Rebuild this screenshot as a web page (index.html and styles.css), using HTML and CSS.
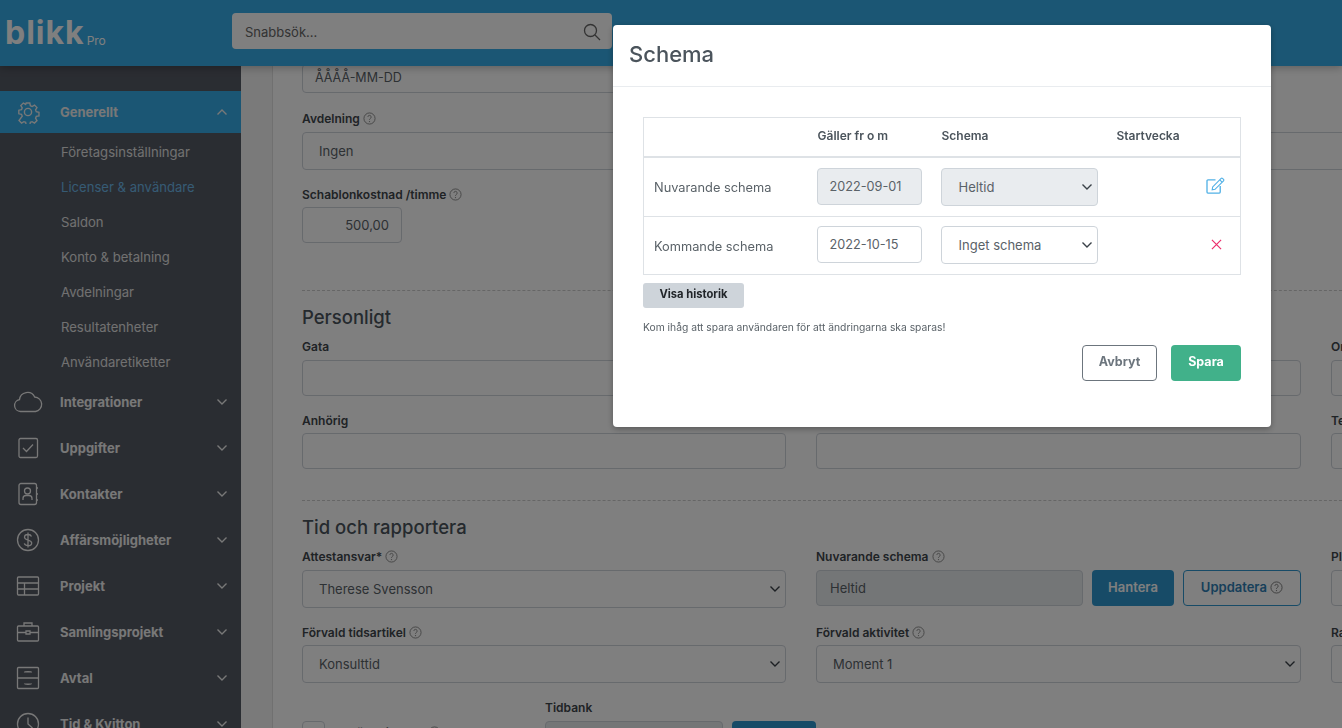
FILE: index.html
```html
<!DOCTYPE html>
<html lang="sv">
<head>
<meta charset="utf-8">
<title>Schema</title>
<link rel="stylesheet" href="styles.css">
</head>
<body>
<svg class="sprite" width="0" height="0">
  <symbol id="q" viewBox="0 0 14 14"><circle cx="7" cy="7" r="6" fill="none" stroke="currentColor"/><path d="M5.2 5.4a1.8 1.8 0 1 1 2.7 1.6c-.6.4-.9.7-.9 1.4" fill="none" stroke="currentColor"/><circle cx="7" cy="10.3" r=".7" fill="currentColor"/></symbol>
  <symbol id="chev" viewBox="0 0 12 8"><path d="M1.5 1.5 6 6l4.5-4.5" fill="none" stroke="currentColor" stroke-width="1.4"/></symbol>
</svg>
<header class="topbar">
  <div class="logo"><span class="logo-word">blikk</span><span class="logo-pro">Pro</span></div>
  <div class="search"><span>Snabbsök...</span>
    <svg class="search-icon" viewBox="0 0 18 18"><circle cx="7.5" cy="7.5" r="6" fill="none" stroke="currentColor" stroke-width="1.3"/><path d="m12 12 5 5" stroke="currentColor" stroke-width="1.3"/></svg>
  </div>
</header>
<div class="shell">
  <nav class="sidebar">
    <a class="nav-item active">
      <svg class="nav-icon" viewBox="0 0 24 24"><path d="M10 2h4l.6 3 2 .9 2.6-1.6 2.8 2.8-1.6 2.6.8 2 3 .6v4l-3 .6-.8 2 1.6 2.6-2.8 2.8-2.6-1.6-2 .8-.6 3h-4l-.6-3-2-.8-2.6 1.6-2.8-2.8L5.600 16.600l-.8-2-3-.6v-4l3-.6.8-2L4 4.800 6.800 2 9.400 3.600z" transform="translate(1.200 1.200) scale(.9)" fill="none" stroke="currentColor" stroke-width="1.500"/><circle cx="12" cy="12" r="3.600" fill="none" stroke="currentColor" stroke-width="1.400"/></svg>
      <span class="nav-label">Generellt</span>
      <svg class="nav-chev up"><use href="#chev"/></svg>
    </a>
    <div class="subnav">
      <a>Företagsinställningar</a>
      <a class="current">Licenser &amp; användare</a>
      <a>Saldon</a>
      <a>Konto &amp; betalning</a>
      <a>Avdelningar</a>
      <a>Resultatenheter</a>
      <a>Användaretiketter</a>
    </div>
    <a class="nav-item">
      <svg class="nav-icon wide" viewBox="0 0 30 22"><path d="M7.500 20.500a6 6 0 0 1-1-11.900A8 8 0 0 1 21.700 6a7.300 7.300 0 0 1 .8 14.500z" fill="none" stroke="currentColor" stroke-width="1.300"/></svg>
      <span class="nav-label">Integrationer</span>
      <svg class="nav-chev"><use href="#chev"/></svg>
    </a>
    <a class="nav-item">
      <svg class="nav-icon" viewBox="0 0 24 24"><rect x="3" y="2.500" width="18.500" height="19" rx="1.500" fill="none" stroke="currentColor" stroke-width="1.300"/><path d="m7 12 3.500 3.500L17 8.500" fill="none" stroke="currentColor" stroke-width="1.300"/></svg>
      <span class="nav-label">Uppgifter</span>
      <svg class="nav-chev"><use href="#chev"/></svg>
    </a>
    <a class="nav-item">
      <svg class="nav-icon" viewBox="0 0 24 24"><rect x="3" y="1.500" width="17.500" height="21" rx="2" fill="none" stroke="currentColor" stroke-width="1.300"/><circle cx="11.500" cy="9" r="3" fill="none" stroke="currentColor" stroke-width="1.300"/><path d="M7 18v-1.500a3 3 0 0 1 3-3h3a3 3 0 0 1 3 3V18M20.500 6h1.500M20.500 12h1.500M20.500 18h1.500" fill="none" stroke="currentColor" stroke-width="1.300"/></svg>
      <span class="nav-label">Kontakter</span>
      <svg class="nav-chev"><use href="#chev"/></svg>
    </a>
    <a class="nav-item">
      <svg class="nav-icon" viewBox="0 0 24 24"><circle cx="12" cy="12" r="10.500" fill="none" stroke="currentColor" stroke-width="1.300"/><path d="M15.500 8.500c-.5-1.300-1.800-2-3.500-2-2 0-3.500 1-3.500 2.700 0 3.600 7.200 2 7.200 5.700 0 1.700-1.600 2.700-3.700 2.700-1.800 0-3.200-.8-3.700-2.200M12 4.500v15" fill="none" stroke="currentColor" stroke-width="1.300"/></svg>
      <span class="nav-label">Affärsmöjligheter</span>
      <svg class="nav-chev"><use href="#chev"/></svg>
    </a>
    <a class="nav-item">
      <svg class="nav-icon" viewBox="0 0 24 24"><rect x="1.500" y="3" width="21" height="18" rx="1" fill="none" stroke="currentColor" stroke-width="1.300"/><path d="M1.500 9h21M1.500 15h21M8.500 9v12" fill="none" stroke="currentColor" stroke-width="1.300"/></svg>
      <span class="nav-label">Projekt</span>
      <svg class="nav-chev"><use href="#chev"/></svg>
    </a>
    <a class="nav-item">
      <svg class="nav-icon" viewBox="0 0 24 24"><rect x="1.500" y="6" width="21" height="15" rx="1" fill="none" stroke="currentColor" stroke-width="1.300"/><path d="M8 6V3h8v3M1.500 12.500h8.500M14 12.500h8.500M10 11h4v3h-4z" fill="none" stroke="currentColor" stroke-width="1.300"/></svg>
      <span class="nav-label">Samlingsprojekt</span>
      <svg class="nav-chev"><use href="#chev"/></svg>
    </a>
    <a class="nav-item">
      <svg class="nav-icon" viewBox="0 0 24 24"><rect x="1.500" y="1.500" width="21" height="21" rx="1" fill="none" stroke="currentColor" stroke-width="1.300"/><path d="M1.500 12h21M8.500 6.500c0-1 7-1 7 0M8.500 17.500c0 1 7 1 7 0" fill="none" stroke="currentColor" stroke-width="1.300"/></svg>
      <span class="nav-label">Avtal</span>
      <svg class="nav-chev"><use href="#chev"/></svg>
    </a>
    <a class="nav-item">
      <svg class="nav-icon" viewBox="0 0 24 24"><circle cx="12" cy="12" r="10.500" fill="none" stroke="currentColor" stroke-width="1.300"/><path d="M12 5.500V12l4.500 4" fill="none" stroke="currentColor" stroke-width="1.300"/></svg>
      <span class="nav-label">Tid &amp; Kvitton</span>
      <svg class="nav-chev"><use href="#chev"/></svg>
    </a>
  </nav>
  <main class="main">
    <div class="sheet">
      <section class="block block-first">
        <div class="field"><div class="control tall-date">ÅÅÅÅ-MM-DD</div></div>
        <div class="field full">
          <label class="label">Avdelning <svg class="help"><use href="#q"/></svg></label>
          <div class="control select-h">Ingen</div>
        </div>
        <div class="field field-cost">
          <label class="label">Schablonkostnad /timme <svg class="help"><use href="#q"/></svg></label>
          <div class="control cost">500,00</div>
        </div>
      </section>
      <section class="block block-personal">
        <h2 class="heading">Personligt</h2>
        <div class="grid">
          <div class="field"><label class="label">Gata</label><div class="control"></div></div>
          <div class="field"><label class="label">Postnummer</label><div class="control"></div></div>
          <div class="field"><label class="label">Ort</label><div class="control"></div></div>
          <div class="field"><label class="label">Anhörig</label><div class="control"></div></div>
          <div class="field"><label class="label">Relation</label><div class="control"></div></div>
          <div class="field"><label class="label">Telefon</label><div class="control"></div></div>
        </div>
      </section>
      <section class="block block-time">
        <h2 class="heading">Tid och rapportera</h2>
        <div class="grid">
          <div class="field">
            <label class="label">Attestansvar* <svg class="help"><use href="#q"/></svg></label>
            <div class="control select-h has-arrow">Therese Svensson<svg class="arrow"><use href="#chev"/></svg></div>
          </div>
          <div class="field">
            <label class="label">Nuvarande schema <svg class="help"><use href="#q"/></svg></label>
            <div class="schema-row">
              <div class="control readonly">Heltid</div>
              <button class="btn btn-blue">Hantera</button>
              <button class="btn btn-outline">Uppdatera <svg class="help help-btn"><use href="#q"/></svg></button>
            </div>
          </div>
          <div class="field"><label class="label">Planering</label><div class="control"></div></div>
          <div class="field">
            <label class="label">Förvald tidsartikel <svg class="help"><use href="#q"/></svg></label>
            <div class="control select-h has-arrow">Konsulttid<svg class="arrow"><use href="#chev"/></svg></div>
          </div>
          <div class="field">
            <label class="label">Förvald aktivitet <svg class="help"><use href="#q"/></svg></label>
            <div class="control select-h has-arrow">Moment 1<svg class="arrow"><use href="#chev"/></svg></div>
          </div>
          <div class="field"><label class="label">Rapportering</label><div class="control select-h"></div></div>
        </div>
        <div class="bank-row">
          <div class="check-wrap"><span class="checkbox"></span><span class="label check-label">Använd tidbank <svg class="help"><use href="#q"/></svg></span></div>
          <div class="bank-field">
            <label class="label">Tidbank</label>
            <div class="bank-controls"><div class="control readonly bank-input"></div><button class="btn btn-blue bank-btn"></button></div>
          </div>
        </div>
      </section>
    </div>
  </main>
</div>
<div class="backdrop">
  <div class="modal">
    <div class="modal-head"><h1 class="modal-title">Schema</h1></div>
    <div class="modal-body">
      <table class="table">
        <thead>
          <tr><th class="c1"></th><th class="c2">Gäller fr o m</th><th class="c3">Schema</th><th class="c4">Startvecka</th><th class="c5"></th></tr>
        </thead>
        <tbody>
          <tr class="row-a">
            <td>Nuvarande schema</td>
            <td><div class="cell-control disabled date">2022-09-01</div></td>
            <td><div class="cell-control disabled sel">Heltid<svg class="arrow"><use href="#chev"/></svg></div></td>
            <td></td>
            <td class="act"><svg class="edit" viewBox="0 0 20 18"><path d="M15 9.500V16a1 1 0 0 1-1 1H2a1 1 0 0 1-1-1V4a1 1 0 0 1 1-1h8" fill="none" stroke="currentColor" stroke-width="1.400"/><path d="M6.500 13.500 7 10.500 16 1.500a1 1 0 0 1 1.400 0l1.100 1.100a1 1 0 0 1 0 1.400L9.500 13z" fill="none" stroke="currentColor" stroke-width="1.200"/><path d="m14.500 3 2.500 2.500" stroke="currentColor" stroke-width="1.200"/></svg></td>
          </tr>
          <tr class="row-b">
            <td>Kommande schema</td>
            <td><div class="cell-control date">2022-10-15</div></td>
            <td><div class="cell-control sel">Inget schema<svg class="arrow"><use href="#chev"/></svg></div></td>
            <td></td>
            <td class="act"><svg class="remove" viewBox="0 0 12 12"><path d="m1 1 10 10M11 1 1 11" stroke="currentColor" stroke-width="1.300"/></svg></td>
          </tr>
        </tbody>
      </table>
      <button class="history">Visa historik</button>
      <p class="note">Kom ihåg att spara användaren för att ändringarna ska sparas!</p>
      <div class="modal-actions">
        <button class="mbtn cancel">Avbryt</button>
        <button class="mbtn save">Spara</button>
      </div>
    </div>
  </div>
</div>
</body>
</html>
```
FILE: styles.css
```css
* { box-sizing: border-box; }
html, body { margin: 0; height: 728px; overflow: hidden; }
body { font-family: "Inter", "Lato", sans-serif; font-size: 13px; color: #4b545c; background: #fff; }
.sprite { position: absolute; }

.topbar { height: 66px; display: flex; align-items: center; position: relative; z-index: 2; box-shadow: 0 2px 8px rgba(0,0,0,.25); background-color: #37ade8; }
.logo { width: 232px; padding-left: 5px; display: flex; align-items: flex-end; color: #fff; height: 30px; flex: none; }
.logo-word { font-size: 32px; font-weight: 700; line-height: 30px; letter-spacing: 1px; }
.logo-pro { font-size: 12px; margin: 0 0 0 2px; font-weight: 400; }
.search { width: 380px; height: 36px; background: #fff; border-radius: 4px; display: flex; align-items: center; justify-content: space-between; padding: 2px 11px 0 13px; color: #666; margin-top: -4px; }
.search-icon { width: 18px; height: 18px; }

.shell { display: flex; height: 662px; }
.sidebar { width: 241px; flex: none; background: #555a64; padding-top: 25px; overflow: hidden; }
.nav-item { height: 46px; display: flex; align-items: center; padding-right: 13px; color: #f0f0f0; font-weight: 700; font-size: 13px; }
.nav-item.active { height: 42px; background: #37ade8; color: #f0f0f0; }
.nav-icon { width: 24px; height: 24px; margin-left: 16px; margin-right: 20px; flex: none; }
.nav-icon.wide { width: 30px; margin-left: 13px; margin-right: 17px; }
.nav-label { flex: 1; }
.nav-chev { width: 12px; height: 8px; }
.nav-chev.up { transform: rotate(180deg); }
.subnav { display: flex; flex-direction: column; padding-top: 1px; }
.subnav a { height: 35px; line-height: 37px; padding-left: 61px; color: #e2e2e2; font-size: 13.100px; }
.subnav a.current { color: #6cb7e8; }

.main { flex: 1; background: #f4f4f4; padding-left: 31px; overflow: hidden; min-width: 0; }
.sheet { background: #fff; border-left: 1px solid #e0e0e0; margin-top: -2px; padding-left: 29px; height: 740px; width: 1100px; }
.block-first { height: 226px; }
.block-personal, .block-time { border-top: 1px dashed #ccc; padding-top: 15px; }
.block-personal { height: 210px; }
.heading { margin: 0 0 10px; font-size: 18.500px; font-weight: 500; line-height: 22px; color: #4b545c; }
.grid { display: grid; grid-template-columns: 484px 485px 300px; column-gap: 30px; row-gap: 16px; }
.grid .field:nth-child(n+4) .label { margin-bottom: 4px; }
.label { display: block; font-weight: 600; font-size: 12px; line-height: 16px; padding-top: 1px; margin-bottom: 5px; color: #3f464c; white-space: nowrap; }
.help { width: 13px; height: 13px; vertical-align: -2px; color: #888; }
.control { height: 36px; border: 1px solid #ced4da; border-radius: 4px; background: #fff; display: flex; align-items: center; padding-left: 16px; color: #5a6268; font-size: 13px; position: relative; }
.tall-date { width: 484px; padding: 0 0 3px 12px; height: 29px; font-size: 12.500px; }
.field.full { width: 1100px; margin-top: 17px; }
.field-cost { margin-top: 16px; }
.field-cost .label { margin-bottom: 4px; }
.select-h { height: 38px; }
.cost { width: 100px; justify-content: flex-end; padding-right: 12px; }
.has-arrow .arrow, .sel .arrow { position: absolute; right: 4px; top: 50%; margin-top: -4px; width: 12px; height: 8px; color: #3a4148; }
.schema-row { display: flex; gap: 9px; }
.readonly { background: #e9ecef; flex: 1; padding-left: 13px; }
.btn { height: 36px; border-radius: 4px; font-family: inherit; font-weight: 600; font-size: 13px; padding: 0 0 3px; }
.btn-blue { width: 82px; background: #2f97cf; border: 0; color: #fff; }
.btn-outline { width: 118px; background: #fff; border: 1px solid #2f97cf; color: #2f7eb5; }
.help-btn { color: #777; }
.bank-row { display: flex; margin-top: 16px; }
.check-wrap { width: 243px; display: flex; align-items: flex-start; padding-top: 22px; gap: 9px; }
.checkbox { width: 23px; height: 23px; border: 1px solid #ced4da; border-radius: 4px; flex: none; }
.check-label { margin: 3px 0 0; }
.bank-controls { display: flex; gap: 9px; }
.bank-input { width: 178px; flex: none; }
.bank-btn { width: 84px; }

.backdrop { position: fixed; inset: 0; z-index: 10; background: rgba(0,0,0,.5); }
.modal { width: 658px; height: 402px; margin: 25px 0 0 613px; background: #fff; border-radius: 4px; box-shadow: 0 2px 6px rgba(0,0,0,.3); }
.modal-head { height: 62px; border-bottom: 1px solid #e9ecef; padding: 13px 16px; }
.modal-title { margin: 0; font-size: 22px; line-height: 32px; font-weight: 500; color: #4b545c; }
.modal-body { padding: 30px 30px 0; }
.table { width: 598px; border-collapse: collapse; table-layout: fixed; border: 1px solid #dee2e6; }
.c1 { width: 173px; } .c2 { width: 124px; } .c3 { width: 176px; } .c4 { width: 66px; } .c5 { width: auto; }
.table th { height: 39px; border-bottom: 2px solid #dee2e6; text-align: left; padding: 0 0 2px 1px; font-size: 12px; font-weight: 600; color: #4b545c; white-space: nowrap; }
.table th.c4 { padding-left: 0; }
.table td { border-top: 1px solid #dee2e6; padding: 0; font-size: 12.800px; color: #5a6268; }
.row-a td { height: 60px; }
.row-b td { height: 58px; padding-bottom: 2px; }
.table td:first-child { padding: 2px 0 0 10px; }
.cell-control { height: 37px; border: 1px solid #ced4da; border-radius: 4px; display: flex; align-items: center; position: relative; color: #5a6268; font-size: 13px; background: #fff; }
.date { width: 105px; padding-left: 12px; font-size: 12.700px; }
.sel { width: 157px; padding-left: 17px; height: 38px; }
.disabled { background: #e9ecef; }
.edit { width: 19px; height: 17px; color: #52b1e6; display: block; margin: -2px 0 0 23px; }
.remove { width: 11px; height: 11px; color: #ec2d6b; display: block; margin-left: 28px; }
.history { display: block; margin-top: 8px; width: 101px; height: 25px; border: 0; border-radius: 3px; background: #ced4da; font-family: inherit; font-size: 11.200px; font-weight: 700; color: #212529; padding: 0 0 4px; }
.note { margin: 12px 0 0; font-size: 10.300px; line-height: 14px; color: #5a6268; }
.modal-actions { display: flex; justify-content: flex-end; gap: 14px; margin-top: 11px; }
.mbtn { height: 36px; border-radius: 4px; font-family: inherit; font-size: 12.500px; font-weight: 700; padding: 0 0 3px; }
.cancel { width: 75px; border: 1px solid #6c757d; background: #fff; color: #6c757d; }
.save { width: 70px; border: 0; background: #41b18a; color: #fff; }
```
